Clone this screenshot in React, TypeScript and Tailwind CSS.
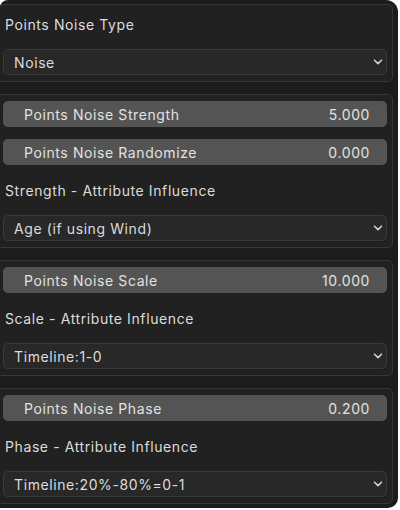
import React from 'react';

const font = { fontFamily: 'Inter, "Noto Sans", sans-serif' };

function Chevron() {
  return (
    <svg width="10" height="6" viewBox="0 0 10 6" className="shrink-0">
      <path
        d="M1.5 1.2 L5 4.6 L8.5 1.2"
        fill="none"
        stroke="#d0d0d0"
        strokeWidth="1.6"
        strokeLinecap="round"
        strokeLinejoin="round"
      />
    </svg>
  );
}

function Label({ text }: { text: string }) {
  return (
    <div className="flex h-[26px] items-center pl-[2px] text-[14px] tracking-[0.6px] text-[#dcdcdc]">
      {text}
    </div>
  );
}

function Dropdown({ value }: { value: string }) {
  return (
    <div className="flex h-[26px] items-center justify-between rounded-[5px] border border-[#3a3a3a] bg-[#282828] pl-[10px] pr-[3px] text-[14px] tracking-[0.6px] text-[#dcdcdc]">
      <span>{value}</span>
      <Chevron />
    </div>
  );
}

function Slider({ label, value }: { label: string; value: string }) {
  return (
    <div className="flex h-[26px] items-center justify-between rounded-[5px] bg-[#545454] pl-[21px] pr-[17px] text-[14px] tracking-[0.6px] text-[#e2e2e2]">
      <span>{label}</span>
      <span>{value}</span>
    </div>
  );
}

function Section({ children }: { children: React.ReactNode }) {
  return (
    <section className="-ml-[4px] flex flex-col gap-[12px] rounded-[5px] border border-[#363636] bg-[#212121] py-[6px] pl-[6px] pr-[5px]">
      {children}
    </section>
  );
}

export default function App() {
  return (
    <div className="h-[510px] w-[400px] bg-white" style={font}>
      <div className="flex h-[508px] w-[398px] flex-col gap-[12px] overflow-hidden rounded-tl-[8px] rounded-tr-[12px] rounded-br-[10px] bg-[#1c1c1c] pr-[5px] pt-[4px]">
        <Section>
          <Label text="Points Noise Type" />
          <Dropdown value="Noise" />
        </Section>
        <Section>
          <Slider label="Points Noise Strength" value="5.000" />
          <Slider label="Points Noise Randomize" value="0.000" />
          <Label text="Strength - Attribute Influence" />
          <Dropdown value="Age (if using Wind)" />
        </Section>
        <Section>
          <Slider label="Points Noise Scale" value="10.000" />
          <Label text="Scale - Attribute Influence" />
          <Dropdown value="Timeline:1-0" />
        </Section>
        <Section>
          <Slider label="Points Noise Phase" value="0.200" />
          <Label text="Phase - Attribute Influence" />
          <Dropdown value="Timeline:20%-80%=0-1" />
        </Section>
      </div>
    </div>
  );
}
